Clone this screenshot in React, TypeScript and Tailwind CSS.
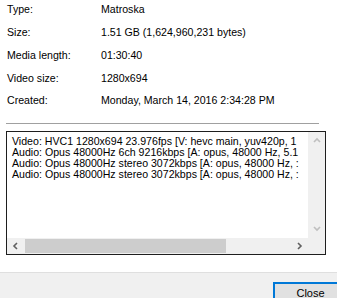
import React from "react";

const rows: [string, string][] = [
  ["Type:", "Matroska"],
  ["Size:", "1.51 GB (1,624,960,231 bytes)"],
  ["Media length:", "01:30:40"],
  ["Video size:", "1280x694"],
  ["Created:", "Monday, March 14, 2016 2:34:28 PM"],
];

const streams = [
  "Video: HVC1 1280x694 23.976fps [V: hevc main, yuv420p, 1",
  "Audio: Opus 48000Hz 6ch 9216kbps [A: opus, 48000 Hz, 5.1",
  "Audio: Opus 48000Hz stereo 3072kbps [A: opus, 48000 Hz, :",
  "Audio: Opus 48000Hz stereo 3072kbps [A: opus, 48000 Hz, :",
];

function Chevron({ dir, color }: { dir: "up" | "down" | "left" | "right"; color: string }) {
  const paths = {
    up: "M1 5 L4 2 L7 5",
    down: "M1 2 L4 5 L7 2",
    left: "M5 1 L2 4 L5 7",
    right: "M2 1 L5 4 L2 7",
  };
  return (
    <svg width="8" height="8" viewBox="0 0 8 8">
      <path d={paths[dir]} fill="none" stroke={color} strokeWidth="1.6" />
    </svg>
  );
}

export default function App() {
  return (
    <div
      className="w-[337px] h-[298px] bg-white overflow-hidden flex flex-col text-[10.6px] text-black"
      style={{ fontFamily: '"Liberation Sans", Arial, sans-serif' }}
    >
      <div className="flex flex-col -mt-px shrink-0">
        {rows.map(([label, value]) => (
          <div key={label} className="h-[22.75px] flex items-center">
            <span className="w-[101px] pl-[7px] shrink-0">{label}</span>
            <span>{value}</span>
          </div>
        ))}
      </div>
      <div className="ml-[6px] w-[313px] h-px bg-[#a0a0a0] mt-[10px] shrink-0" />

      <div className="ml-[6px] mt-[7px] w-[320px] h-[124px] shrink-0 border border-[#1e1e1e] flex flex-col">
        <div className="flex flex-1 min-h-0">
          <div className="flex-1 overflow-hidden pl-[5px] pt-[4px] leading-[11.2px] whitespace-nowrap">
            {streams.map((s, i) => (
              <div key={i}>{s}</div>
            ))}
          </div>
          <div className="w-[17px] bg-[#f0f0f0] flex flex-col items-center justify-between py-[5px]">
            <Chevron dir="up" color="#bfbfbf" />
            <Chevron dir="down" color="#bfbfbf" />
          </div>
        </div>
        <div className="h-[16px] bg-[#f0f0f0] flex items-center">
          <div className="w-[18px] flex justify-center">
            <Chevron dir="left" color="#606060" />
          </div>
          <div className="w-[201px] h-[14px] bg-[#cdcdcd]" />
          <div className="flex-1" />
          <div className="w-[17px] flex justify-center mr-[17px]">
            <Chevron dir="right" color="#606060" />
          </div>
        </div>
      </div>

      <div className="mt-[17px] flex-1 min-h-0 bg-[#f0f0f0] border-t border-[#dfdfdf] flex justify-end items-start pt-[9px]">
        <button className="w-[75px] h-[24px] shrink-0 -mr-[11px] border-2 border-[#0078d7] bg-[#e1e1e1] text-[11px] leading-none">
          Close
        </button>
      </div>
    </div>
  );
}
